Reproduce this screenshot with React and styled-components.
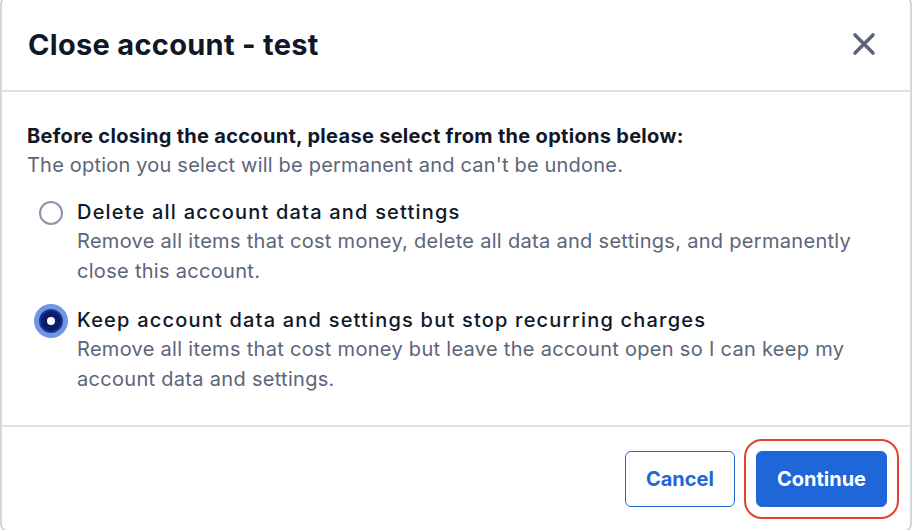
import React, { useState } from "react";
import styled, { createGlobalStyle } from "styled-components";

const GlobalStyle = createGlobalStyle`
  html, body {
    margin: 0;
    padding: 0;
    background: #ffffff;
    overflow: hidden;
  }
  body {
    font-family: Inter, "Noto Sans", "Liberation Sans", sans-serif;
    -webkit-font-smoothing: antialiased;
  }
`;

const Dialog = styled.div`
  box-sizing: border-box;
  width: 912px;
  height: 536px;
  margin-top: -4px;
  border: 2px solid #d2d7e1;
  border-radius: 8px;
  background: #fff;
  display: flex;
  flex-direction: column;
`;

const Header = styled.header`
  box-sizing: border-box;
  height: 94px;
  padding: 0 31px 0 26px;
  display: flex;
  align-items: center;
  justify-content: space-between;
  border-bottom: 2px solid #dfe1e7;
`;

const Title = styled.h1`
  margin: 0;
  font-size: 29px;
  font-weight: 700;
  letter-spacing: 0.3px;
  color: #101828;
`;

const CloseButton = styled.button`
  width: 30px;
  height: 30px;
  padding: 0;
  border: none;
  background: none;
  display: flex;
  align-items: center;
  justify-content: center;
  cursor: pointer;
  color: #5b6579;
`;

const Body = styled.section`
  padding: 30px 20px 31px 25px;
  display: flex;
  flex-direction: column;
`;

const Lead = styled.p`
  margin: 0;
  font-size: 20px;
  line-height: 29px;
  font-weight: 700;
  color: #101828;
  letter-spacing: 0.3px;
`;

const Note = styled.p`
  margin: 0;
  font-size: 20px;
  line-height: 29px;
  color: #5b6579;
  letter-spacing: 0.2px;
`;

const Options = styled.div`
  margin-top: 18px;
  display: flex;
  flex-direction: column;
  gap: 20px;
`;

const Option = styled.label`
  display: flex;
  align-items: flex-start;
  gap: 2px;
  cursor: pointer;
`;

const RadioBox = styled.span`
  flex: 0 0 48px;
  height: 29px;
  display: flex;
  align-items: center;
  justify-content: center;
`;

const Radio = styled.span`
  box-sizing: border-box;
  width: 24px;
  height: 24px;
  border-radius: 50%;
  display: flex;
  align-items: center;
  justify-content: center;
  border: ${(p) => (p.$checked ? "2px solid #1a3590" : "2px solid #8c94a8")};
  background: ${(p) => (p.$checked ? "#0a1c6c" : "#fff")};
  box-shadow: ${(p) => (p.$checked ? "0 0 0 5px #6e98e5" : "none")};

  &::after {
    content: "";
    display: ${(p) => (p.$checked ? "block" : "none")};
    width: 8px;
    height: 8px;
    border-radius: 50%;
    background: #fff;
  }
`;

const OptionText = styled.span`
  display: flex;
  flex-direction: column;
`;

const OptionTitle = styled.span`
  font-size: 20px;
  line-height: 29px;
  font-weight: 500;
  letter-spacing: 1.2px;
  color: #101828;
`;

const OptionDesc = styled.span`
  font-size: 20px;
  line-height: 29.5px;
  letter-spacing: 0.3px;
  color: #5b6579;
`;

const Footer = styled.footer`
  flex: 1;
  border-top: 2px solid #dfe1e7;
  padding: 24px 23px 0 0;
  display: flex;
  justify-content: flex-end;
  align-items: flex-start;
  gap: 21px;
`;

const Button = styled.button`
  box-sizing: border-box;
  height: 56px;
  padding: 0 20px;
  border-radius: 6px;
  font-family: inherit;
  font-size: 20px;
  font-weight: 700;
  cursor: pointer;
  border: 1.5px solid #2167d8;
  background: ${(p) => (p.$primary ? "#1f66d9" : "#fff")};
  color: ${(p) => (p.$primary ? "#fff" : "#1f66d9")};
  outline: ${(p) => (p.$focused ? "2px solid #e1432f" : "none")};
  outline-offset: 10px;
`;

const options = [
  {
    id: "delete",
    title: "Delete all account data and settings",
    desc: "Remove all items that cost money, delete all data and settings, and permanently close this account.",
  },
  {
    id: "keep",
    title: "Keep account data and settings but stop recurring charges",
    desc: "Remove all items that cost money but leave the account open so I can keep my account data and settings.",
  },
];

export default function App() {
  const [selected, setSelected] = useState("keep");

  return (
    <>
      <GlobalStyle />
      <Dialog>
        <Header>
          <Title>Close account - test</Title>
          <CloseButton aria-label="Close">
            <svg width="26" height="26" viewBox="0 0 26 26">
              <path
                d="M4 4 L22 22 M22 4 L4 22"
                stroke="currentColor"
                strokeWidth="3.6"
                strokeLinecap="round"
              />
            </svg>
          </CloseButton>
        </Header>
        <Body>
          <Lead>Before closing the account, please select from the options below:</Lead>
          <Note>The option you select will be permanent and can't be undone.</Note>
          <Options>
            {options.map((o) => (
              <Option key={o.id} onClick={() => setSelected(o.id)}>
                <RadioBox>
                  <Radio $checked={selected === o.id} />
                </RadioBox>
                <OptionText>
                  <OptionTitle>{o.title}</OptionTitle>
                  <OptionDesc>{o.desc}</OptionDesc>
                </OptionText>
              </Option>
            ))}
          </Options>
        </Body>
        <Footer>
          <Button>Cancel</Button>
          <Button $primary $focused>
            Continue
          </Button>
        </Footer>
      </Dialog>
    </>
  );
}
